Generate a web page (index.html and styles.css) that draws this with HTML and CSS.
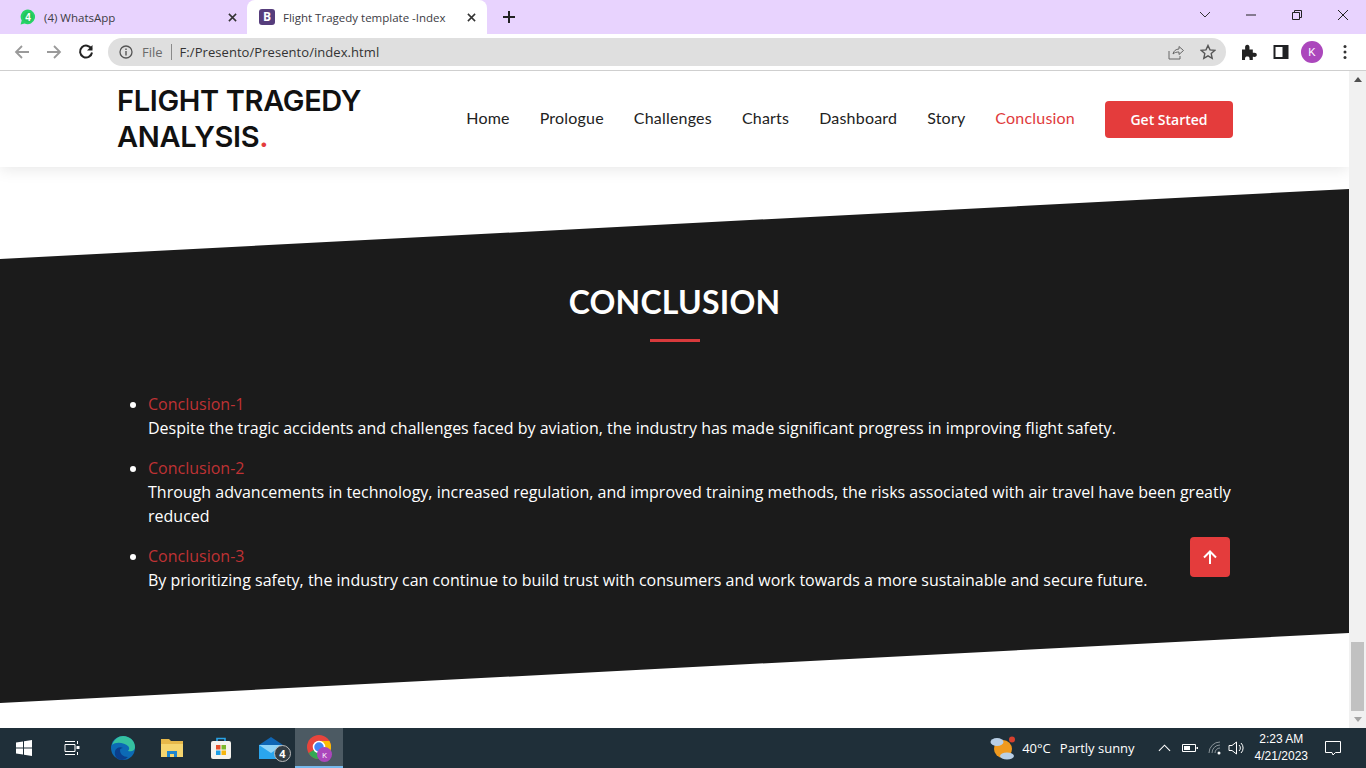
FILE: index.html
```html
<!DOCTYPE html>
<html lang="en">
<head>
  <meta charset="utf-8">
  <title>Flight Tragedy template -Index</title>
  <link rel="stylesheet" href="styles.css">
</head>
<body>
  <div class="tabstrip">
    <div class="tab">
      <svg class="favicon" viewBox="0 0 16 16"><path d="M8 .5a7.300 7.300 0 0 0-6.300 11L.6 15.500l4-1.100A7.300 7.300 0 1 0 8 .5z" fill="#25d366"/><circle cx="8" cy="8" r="5" fill="#25c45a"/><text x="8" y="11.500" text-anchor="middle" class="fav-num">4</text></svg>
      <span class="tab-title">(4) WhatsApp</span>
      <svg class="tab-close" viewBox="0 0 10 10"><path d="M1 1l8 8M9 1l-8 8" stroke="#333" stroke-width="1.700"/></svg>
    </div>
    <div class="tab tab-active">
      <span class="bs-icon">B</span>
      <span class="tab-title">Flight Tragedy template -Index</span>
      <svg class="tab-close" viewBox="0 0 10 10"><path d="M1 1l8 8M9 1l-8 8" stroke="#333" stroke-width="1.700"/></svg>
    </div>
    <svg class="new-tab" viewBox="0 0 12 12"><path d="M6 0v12M0 6h12" stroke="#222" stroke-width="2"/></svg>
    <div class="win-controls">
      <svg class="win-btn" viewBox="0 0 46 20"><path d="M5 6l5 5 5-5" transform="translate(13 1)" fill="none" stroke="#333"/></svg>
      <svg class="win-btn" viewBox="0 0 46 20"><path d="M18 10h10" stroke="#222"/></svg>
      <svg class="win-btn" viewBox="0 0 46 20"><path d="M18.500 7.500h7v7h-7zM20.500 7V5.500h7v7H26" fill="none" stroke="#222"/></svg>
      <svg class="win-btn" viewBox="0 0 46 20"><path d="M18 5l10 10M28 5L18 15" stroke="#222"/></svg>
    </div>
  </div>

  <div class="toolbar">
    <svg class="nav-icon" viewBox="0 0 16 16"><path d="M15 8H2M8 2L2 8l6 6" fill="none" stroke="#9a9a9a" stroke-width="1.800"/></svg>
    <svg class="nav-icon" viewBox="0 0 16 16"><path d="M1 8h13M8 2l6 6-6 6" fill="none" stroke="#9a9a9a" stroke-width="1.800"/></svg>
    <svg class="nav-icon" viewBox="0 0 16 16"><path d="M13.500 5A6 6 0 1 0 14 8.500" fill="none" stroke="#222" stroke-width="2"/><path d="M14.500 1v5.500H9z" fill="#222"/></svg>
    <div class="omnibox">
      <svg class="info-icon" viewBox="0 0 14 14"><circle cx="7" cy="7" r="6" fill="none" stroke="#555" stroke-width="1.300"/><path d="M7 6v4.500M7 3.500v1.500" stroke="#555" stroke-width="1.400"/></svg>
      <span class="scheme">File</span>
      <span class="url">F:/Presento/Presento/index.html</span>
      <svg class="omni-icon" viewBox="0 0 16 16"><path d="M1 7v8h11v-3" fill="none" stroke="#666"/><path d="M5 10c.5-3 3-5 6-5V2.500L15.500 6.500 11 10.500V8c-2.500 0-4.500.5-6 2z" fill="none" stroke="#666"/></svg>
      <svg class="omni-icon omni-last" viewBox="0 0 16 16"><path d="M8 1.500l2 4.400 4.700.5-3.500 3.200 1 4.700L8 11.900l-4.200 2.400 1-4.700-3.500-3.200L6 5.900z" fill="none" stroke="#555" stroke-width="1.400"/></svg>
    </div>
    <svg class="ext-icon" viewBox="0 0 16 16"><path d="M1 5.500h3.200C3.800 2 4.500.8 6.300.8s2.500 1.200 2.100 4.700h3.400v3.300c3-.4 4 .3 4 2s-1 2.400-4 2v3.400H8.500c.4-3-.5-3.800-2.200-3.800s-2.600.8-2.200 3.800H1z" fill="#222"/></svg>
    <svg class="ext-icon" viewBox="0 0 16 16"><path d="M1.500 2h13v12h-13z" fill="#fff" stroke="#202124" stroke-width="2"/><path d="M9.500 2h5v12h-5z" fill="#202124"/></svg>
    <span class="avatar">K</span>
    <svg class="menu-dots" viewBox="0 0 4 16"><circle cx="2" cy="2.500" r="1.500"/><circle cx="2" cy="8" r="1.500"/><circle cx="2" cy="13.500" r="1.500"/></svg>
  </div>

  <div class="viewport">
    <div class="page">
      <header class="site-header">
        <h1 class="logo"><span class="logo-line">FLIGHT TRAGEDY</span><span class="logo-line">ANALYSIS<span class="logo-dot">.</span></span></h1>
        <nav class="site-nav">
          <a href="#">Home</a>
          <a href="#">Prologue</a>
          <a href="#">Challenges</a>
          <a href="#">Charts</a>
          <a href="#">Dashboard</a>
          <a href="#">Story</a>
          <a href="#" class="nav-current">Conclusion</a>
          <a href="#" class="get-started">Get Started</a>
        </nav>
      </header>

      <section class="conclusion">
        <h2 class="section-title">CONCLUSION</h2>
        <ul class="points">
          <li><span class="point-label">Conclusion-1</span><br>Despite the tragic accidents and challenges faced by aviation, the industry has made significant progress in improving flight safety.</li>
          <li><span class="point-label">Conclusion-2</span><br>Through advancements in technology, increased regulation, and improved training methods, the risks associated with air travel have been greatly reduced</li>
          <li><span class="point-label">Conclusion-3</span><br>By prioritizing safety, the industry can continue to build trust with consumers and work towards a more sustainable and secure future.</li>
        </ul>
      </section>

      <a href="#" class="back-to-top">
        <svg viewBox="0 0 14 14"><path d="M7 14V1.500M1 7.500l6-6 6 6" fill="none" stroke="#fff" stroke-width="2"/></svg>
      </a>
    </div>
    <div class="scrollbar">
      <span class="arrow-up"></span>
      <span class="scroll-track"><span class="scroll-thumb"></span></span>
      <span class="arrow-down"></span>
    </div>
  </div>

  <div class="taskbar">
    <svg class="start-icon" viewBox="0 0 16 16"><path d="M0 2.500l7-1v6H0zM8 1.300L16 0v7.500H8zM0 8.500h7v6l-7-1zM8 8.500h8V16l-8-1.300z" fill="#fff"/></svg>
    <svg class="task-view" viewBox="0 0 16 16"><path d="M1 4.500h10v7H1zM1 1.500h10M1 14.500h10" fill="none" stroke="#fff"/><path d="M13.500 1v3M13.500 12v3" stroke="#fff"/><path d="M12.500 6h3v3h-3z" fill="#fff"/></svg>
    <svg class="app edge" viewBox="0 0 24 24"><circle cx="12" cy="12" r="12" fill="#0c6ab5"/><path d="M1 9C3 3 8 0 12 0c7 0 12 5 12 11 0 4-4 5-7 4 1-1 2-3 0-5-3-3-12-5-16-1z" fill="#35c1a0"/><path d="M9 14c0 4 3 7 8 7-2 2-4 3-6 3-5 0-8-4-7-9 1-3 5-5 8-3-2 0-3 1-3 2z" fill="#0a3f8c"/></svg>
    <svg class="app" viewBox="0 0 24 24"><path d="M1 3h8l2 2h12v16H1z" fill="#e6b84a"/><path d="M1 8h22v13H1z" fill="#f5d56f"/><path d="M7 21v-6h10v6h-3v-3h-4v3z" fill="#1f86d0"/></svg>
    <svg class="app" viewBox="0 0 24 24"><path d="M8 6V2.500h8V6" fill="none" stroke="#2aa5e8" stroke-width="1.600"/><rect x="2" y="5" width="20" height="18" rx="2" fill="#f5f3ee"/><path d="M7 9h4.500v4.500H7z" fill="#e8512c"/><path d="M12.500 9H17v4.500h-4.500z" fill="#7cb82a"/><path d="M7 14.500h4.500V19H7z" fill="#1c9fe6"/><path d="M12.500 14.500H17V19h-4.500z" fill="#f6b60f"/></svg>
    <span class="mail">
      <svg class="app" viewBox="0 0 26 24"><path d="M1 9l12-8 12 8v14H1z" fill="#0f66b5"/><path d="M1 9h24v14H1z" fill="#2aa5ee"/><path d="M1 9l12 8 12-8" fill="#8fd4f8"/></svg>
      <span class="mail-badge">4</span>
    </span>
    <span class="chrome-task">
      <svg class="chrome-icon" viewBox="0 0 24 24"><circle cx="12" cy="12" r="12" fill="#e8453c"/><path d="M12 12L1.600 18A12 12 0 0 0 12 24c6 0 5-6 5-6z" fill="#34a853"/><path d="M12 6h10.400A12 12 0 0 1 12 24z" fill="#fbbc05"/><circle cx="12" cy="12" r="5.500" fill="#4285f4" stroke="#fff" stroke-width="1.500"/></svg>
      <span class="chrome-badge">K</span>
    </span>
    <span class="tray">
      <svg class="weather" viewBox="0 0 26 24"><circle cx="13" cy="13" r="9" fill="#f09a1f"/><circle cx="22" cy="3.500" r="3" fill="#d6402e"/><ellipse cx="7" cy="6" rx="6.500" ry="4" fill="#b9cfe6"/><ellipse cx="17" cy="20" rx="7" ry="3.500" fill="#b9cfe6"/></svg>
      <span class="temp">40°C</span>
      <span class="forecast">Partly sunny</span>
      <svg class="tray-icon chevron" viewBox="0 0 14 8"><path d="M1 7l6-6 6 6" fill="none" stroke="#fff" stroke-width="1.200"/></svg>
      <svg class="tray-icon battery" viewBox="0 0 16 10"><path d="M.5 1.500h13v7H.5z" fill="none" stroke="#fff"/><path d="M2 3h6v4H2zM14.500 4H16v2h-1.500z" fill="#fff"/></svg>
      <svg class="tray-icon wifi" viewBox="0 0 14 14"><path d="M1 12a11 11 0 0 1 11-11M4 12a8 8 0 0 1 8-8M7 12a5 5 0 0 1 5-5" fill="none" stroke="#8b9499"/><circle cx="11" cy="12" r="1.500" fill="#fff"/></svg>
      <svg class="tray-icon speaker" viewBox="0 0 18 16"><path d="M1 5.500h3L8.500 2v12L4 10.500H1z" fill="none" stroke="#fff"/><path d="M11 5a4 4 0 0 1 0 6M13 3a7 7 0 0 1 0 10" fill="none" stroke="#fff"/></svg>
      <span class="clock"><span>2:23 AM</span><span>4/21/2023</span></span>
      <svg class="notify" viewBox="0 0 16 16"><path d="M.5 1.500h15v11h-5L8 15l-1-2.500H.5z" fill="none" stroke="#fff"/></svg>
    </span>
  </div>
</body>
</html>
```

FILE: styles.css
```css
html, body { margin: 0; padding: 0; }
body {
  width: 1366px;
  height: 768px;
  overflow: hidden;
  display: flex;
  flex-direction: column;
  font-family: "Open Sans", sans-serif;
  background: #fff;
}
svg { display: block; flex: none; }
a { text-decoration: none; color: inherit; }

/* browser tabs */
.tabstrip {
  height: 34px;
  flex: none;
  display: flex;
  align-items: stretch;
  background: #e8d3fe;
  font-family: "Open Sans", sans-serif;
  font-size: 11.5px;
  color: #3c3c44;
}
.tab {
  width: 247px;
  display: flex;
  align-items: center;
  box-sizing: border-box;
  padding: 0 10px 0 20px;
}
.tab-active {
  width: 240px;
  padding: 0 11px 0 12px;
  background: #fff;
  border-radius: 8px 8px 0 0;
}
.favicon { width: 16px; height: 16px; margin-right: 8px; }
.fav-num { font: bold 10px "Liberation Sans", sans-serif; fill: #fff; }
.bs-icon {
  width: 16px;
  height: 16px;
  margin-right: 8px;
  border-radius: 3px;
  background: #563d7c;
  color: #fff;
  font-weight: bold;
  font-size: 12px;
  line-height: 16px;
  text-align: center;
}
.tab-title { flex: 1; white-space: nowrap; }
.tab-close { width: 9px; height: 9px; }
.new-tab { width: 12px; height: 12px; margin: 11px 0 0 16px; }
.win-controls { margin-left: auto; display: flex; }
.win-btn { width: 46px; height: 20px; margin-top: 5px; }

/* address bar */
.toolbar {
  height: 36px;
  flex: none;
  display: flex;
  align-items: center;
  border-bottom: 1px solid #cfcfcf;
  background: #fff;
}
.nav-icon { width: 16px; height: 16px; margin-left: 14px; }
.nav-icon + .nav-icon { margin-left: 16px; }
.omnibox {
  width: 1118px;
  height: 28px;
  margin-left: 14px;
  border-radius: 14px;
  background: #dfdfdf;
  display: flex;
  align-items: center;
  font-family: "Open Sans", sans-serif;
  font-size: 13px;
}
.info-icon { width: 14px; height: 14px; margin-left: 11px; }
.scheme {
  margin-left: 9px;
  padding-right: 8px;
  color: #6a6a6a;
  border-right: 1px solid #8a8a8a;
  line-height: 16px;
}
.url { margin-left: 8px; color: #333; flex: 1; letter-spacing: 0.06px; }
.omni-icon { width: 16px; height: 16px; margin-right: 16px; }
.omni-last { margin-right: 10px; }
.ext-icon { width: 16px; height: 16px; margin-left: 15px; }
.ext-icon + .ext-icon { margin-left: 16px; }
.avatar {
  width: 22px;
  height: 22px;
  margin-left: 12px;
  border-radius: 50%;
  background: #ab47bc;
  color: #fff;
  font-family: "Liberation Sans", sans-serif;
  font-size: 11px;
  line-height: 22px;
  text-align: center;
}
.menu-dots { width: 4px; height: 16px; margin-left: 20px; fill: #333; }

/* page area */
.viewport {
  flex: 1;
  min-height: 0;
  display: flex;
}
.page {
  flex: 1;
  position: relative;
  overflow: hidden;
  background: #fff;
}
.site-header {
  height: 96px;
  box-sizing: border-box;
  padding: 0 116px 0 117px;
  display: flex;
  align-items: center;
  justify-content: space-between;
  background: #fff;
  box-shadow: 0 2px 15px rgba(0, 0, 0, 0.1);
  position: relative;
}
.logo {
  margin: 0;
  font-family: "Inter", sans-serif;
  font-size: 29px;
  font-weight: 600;
  letter-spacing: -0.35px;
  line-height: 36px;
  color: #111;
}
.logo-line { display: block; }
.logo-dot { color: #e43c3c; }
.site-nav {
  display: flex;
  align-items: center;
  gap: 30px;
  font-family: "Lato", sans-serif;
  font-size: 16px;
  letter-spacing: 0.2px;
  font-weight: 400;
  color: #222;
}
.site-nav a:not(.get-started) { padding-bottom: 4px; }
.nav-current { color: #e03a3c; }
.get-started {
  width: 128px;
  height: 37px;
  box-sizing: border-box;
  border-radius: 4px;
  background: #e43c3c;
  color: #fff;
  font-family: "Open Sans", sans-serif;
  font-size: 14px;
  font-weight: 600;
  letter-spacing: 0;
  line-height: 37px;
  text-align: center;
}

/* dark section */
.conclusion {
  height: 514px;
  margin-top: 22px;
  box-sizing: border-box;
  padding-top: 92px;
  background: #1b1b1b;
  clip-path: polygon(0 70px, 100% 0, 100% 444px, 0 100%);
  color: #fff;
}
.section-title {
  margin: 0 0 50px;
  font-family: "Lato", sans-serif;
  font-size: 32px;
  font-weight: 700;
  letter-spacing: 0.2px;
  line-height: 42px;
  text-align: center;
}
.section-title::after {
  content: "";
  display: block;
  width: 50px;
  height: 3px;
  margin: 16px auto 0;
  background: #d83a3c;
}
.points {
  margin: 0 117px 0 116px;
  padding: 0 0 0 32px;
  font-size: 16px;
  font-weight: 500;
  line-height: 24px;
}
.points li { margin-bottom: 16px; }
.point-label { color: #bf3234; font-weight: 400; }

.back-to-top {
  position: absolute;
  left: 1190px;
  top: 466px;
  width: 40px;
  height: 40px;
  border-radius: 4px;
  background: #e43c3c;
  display: flex;
  align-items: center;
  justify-content: center;
}
.back-to-top svg { width: 14px; height: 14px; }

.scrollbar {
  width: 17px;
  flex: none;
  background: #f1f1f1;
  display: flex;
  flex-direction: column;
  align-items: center;
}
.arrow-up, .arrow-down {
  width: 0;
  height: 0;
  flex: none;
  border-left: 4px solid transparent;
  border-right: 4px solid transparent;
}
.arrow-up { margin: 6px 0; border-bottom: 5px solid #505050; }
.arrow-down { margin: 6px 0; border-top: 5px solid #a3a3a3; }
.scroll-track {
  flex: 1;
  width: 100%;
  display: flex;
  flex-direction: column;
  justify-content: flex-end;
}
.scroll-thumb {
  display: block;
  width: 13px;
  height: 69px;
  margin: 0 2px;
  background: #c1c1c1;
}

/* windows taskbar */
.taskbar {
  height: 40px;
  flex: none;
  display: flex;
  align-items: center;
  background: #1f2f39;
  color: #fff;
  font-family: "Open Sans", sans-serif;
  font-size: 13px;
}
.start-icon { width: 16px; height: 16px; margin-left: 16px; }
.task-view { width: 16px; height: 16px; margin-left: 32px; }
.app { width: 24px; height: 24px; }
.edge { margin-left: 31px; }
.taskbar > .app + .app { margin-left: 25px; }
.mail { position: relative; margin-left: 25px; }
.mail .app { width: 26px; }
.mail-badge {
  position: absolute;
  left: 16px;
  top: 9px;
  width: 15px;
  height: 15px;
  border-radius: 50%;
  border: 1px solid #bbb;
  background: #333d44;
  font-size: 11px;
  font-weight: bold;
  line-height: 15px;
  text-align: center;
}
.chrome-task {
  position: relative;
  width: 48px;
  height: 40px;
  margin-left: 11px;
  box-sizing: border-box;
  border-bottom: 2px solid #76b9ed;
  background: #4c5a63;
  display: flex;
  align-items: center;
  justify-content: center;
}
.chrome-icon { width: 24px; height: 24px; }
.chrome-badge {
  position: absolute;
  left: 22px;
  top: 19px;
  width: 15px;
  height: 15px;
  border-radius: 50%;
  background: #ab47bc;
  font-size: 8px;
  line-height: 15px;
  text-align: center;
}
.tray { margin-left: auto; display: flex; align-items: center; }
.weather { width: 26px; height: 24px; }
.temp { margin-left: 6px; }
.forecast { margin-left: 9px; }
.tray-icon { margin-left: 12px; }
.chevron { width: 13px; height: 8px; margin-left: 23px; }
.battery { width: 16px; height: 10px; margin-left: 11px; }
.wifi { width: 14px; height: 14px; margin-left: 10px; }
.speaker { width: 18px; height: 16px; margin-left: 6px; }
.clock {
  display: flex;
  flex-direction: column;
  align-items: center;
  margin-left: 9px;
  font-family: "Liberation Sans", sans-serif;
  font-size: 12px;
  line-height: 17px;
}
.notify { width: 16px; height: 16px; margin: 0 25px 0 17px; }
```
